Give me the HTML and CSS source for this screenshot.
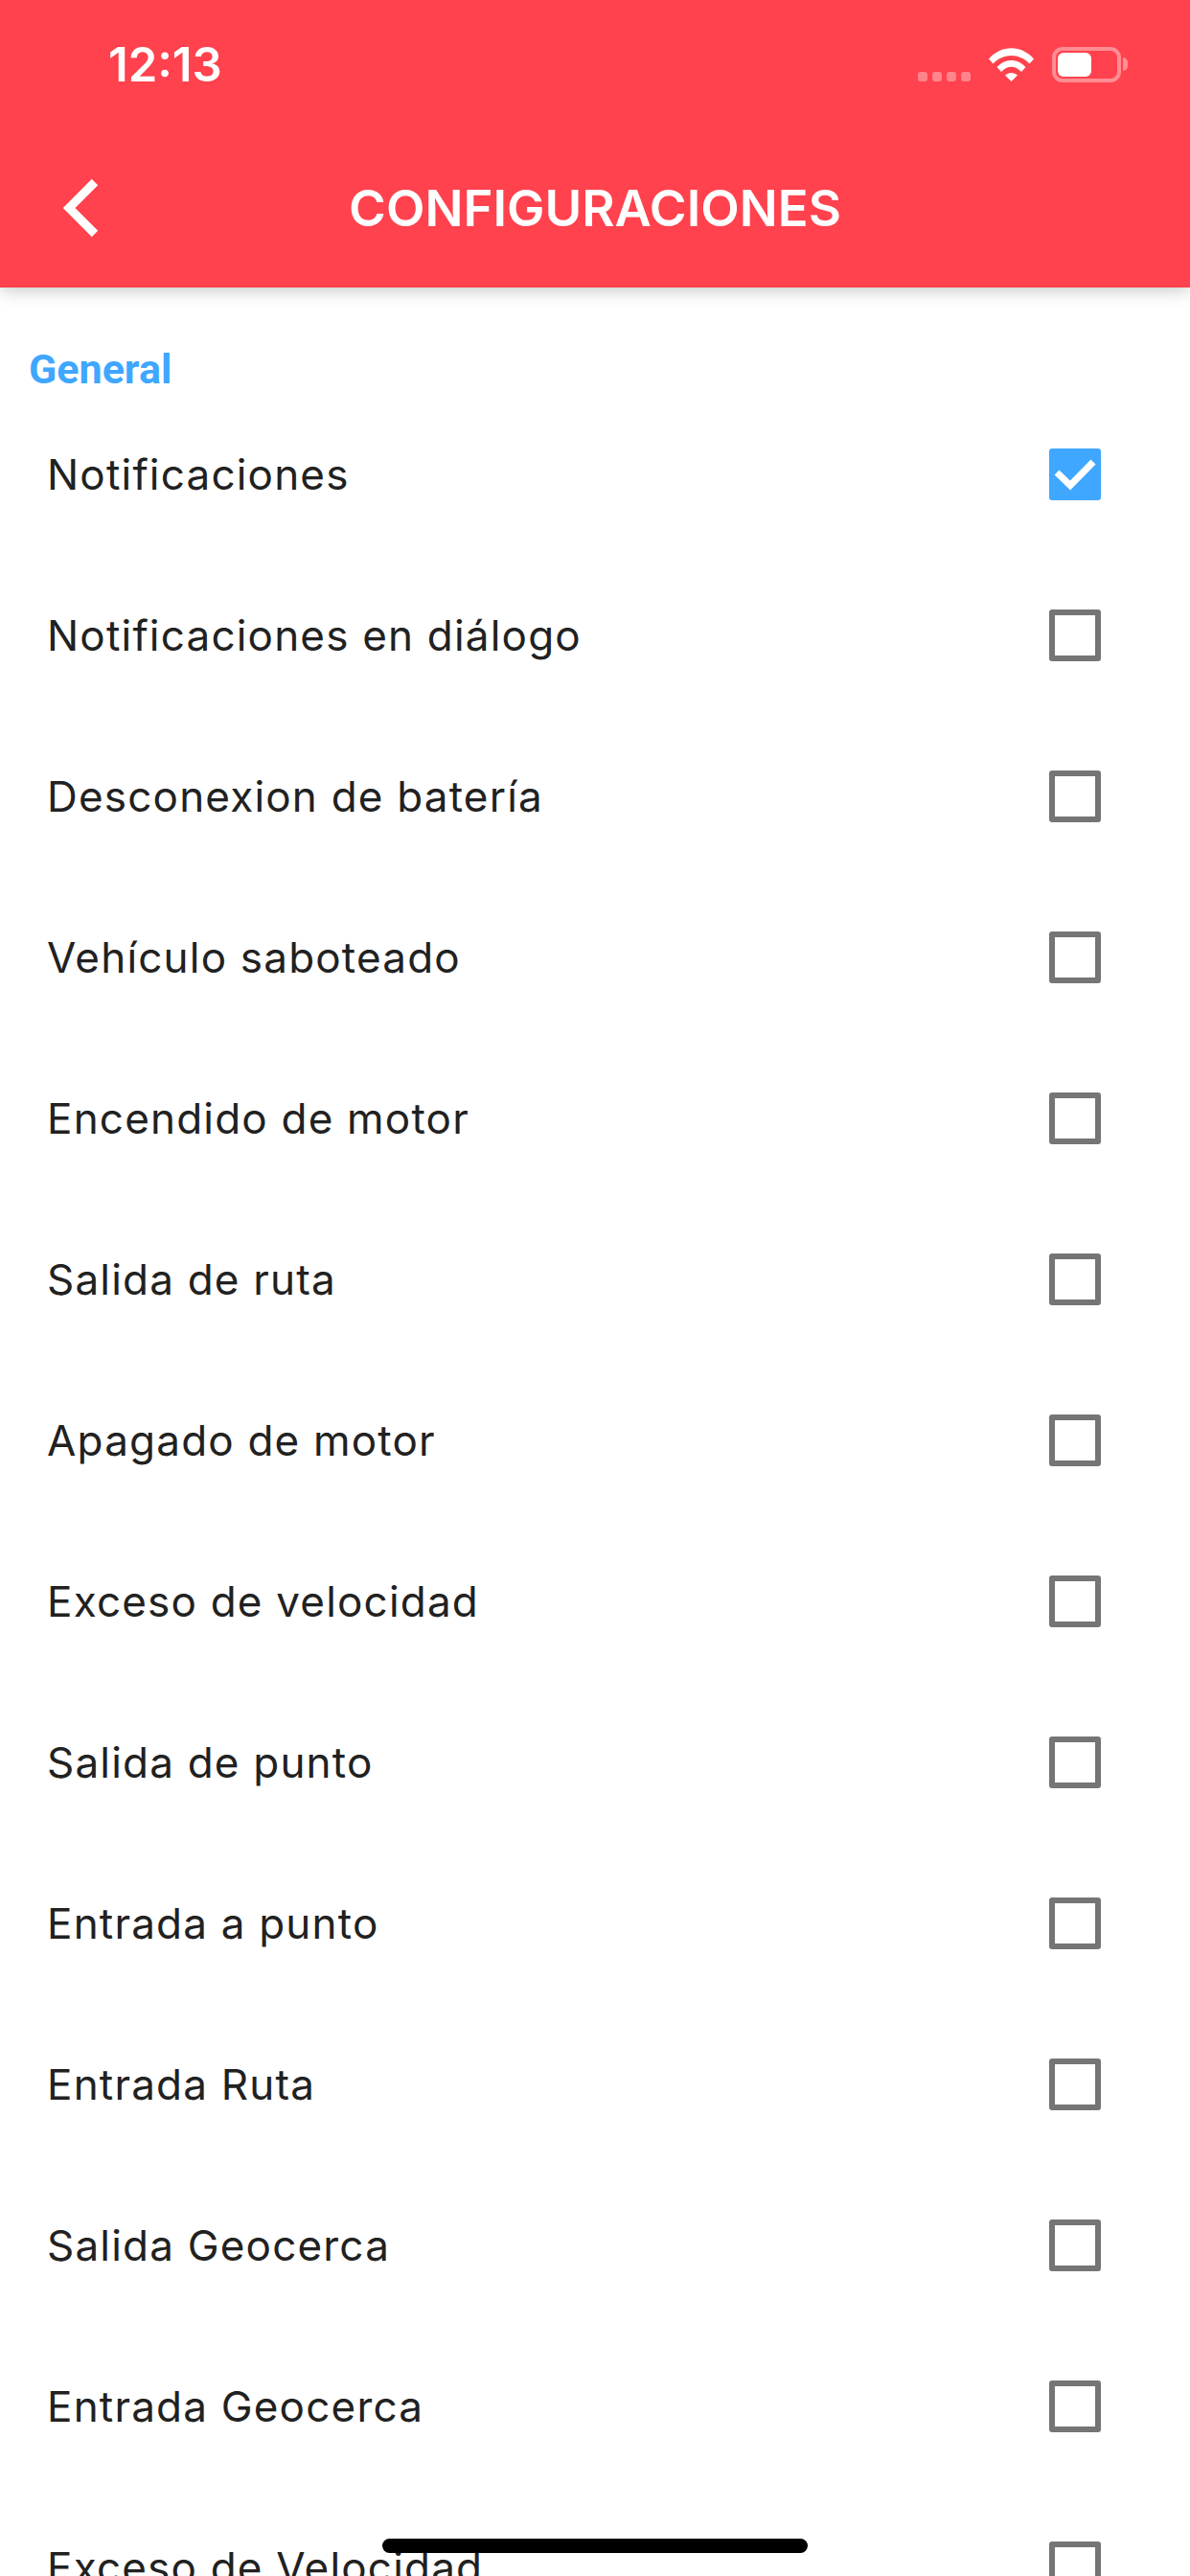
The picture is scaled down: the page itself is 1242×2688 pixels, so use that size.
FILE: index.html
```html
<!DOCTYPE html>
<html lang="es">
<head>
<meta charset="utf-8" />
<title>Configuraciones</title>
<link rel="stylesheet" href="styles.css">
</head>
<body>
<div class="phone">
	<div class="header">
		<div class="status">
			<span class="time">12:13</span>
			<div class="status_icons">
				<div class="signal"><i></i><i></i><i></i><i></i></div>
				<svg class="wifi" width="47" height="36" viewBox="0 0 47 36">
					<path d="M0 12.5 C13 -2.5 34 -2.5 47 12.5 L42.5 17.5 C32 6 15 6 4.5 17.5 Z" fill="#fff"/>
					<path d="M8.5 21 C17 11.5 30 11.5 38.500 21 L34 26 C27.500 19 19.500 19 13 26 Z" fill="#fff"/>
					<path d="M17 29.500 C21 26 26 26 30 29.500 L23.500 36 Z" fill="#fff"/>
				</svg>
				<div class="battery"><div class="battery_fill"></div></div>
				<div class="battery_nub"></div>
			</div>
		</div>
		<div class="toolbar">
			<svg class="back" width="37" height="60" viewBox="0 0 37 60">
				<path d="M33 3 L6 30 L33 57" fill="none" stroke="#fff" stroke-width="9"/>
			</svg>
			<h1>CONFIGURACIONES</h1>
		</div>
	</div>
	<div class="section_title">General</div>
	<ul class="settings">
		<li><span>Notificaciones</span><div class="check on"><svg width="54" height="54" viewBox="0 0 54 54"><path d="M8 25 L22 38.500 L46 14" fill="none" stroke="#fff" stroke-width="7"/></svg></div></li>
		<li><span>Notificaciones en diálogo</span><div class="check"></div></li>
		<li><span>Desconexion de batería</span><div class="check"></div></li>
		<li><span>Vehículo saboteado</span><div class="check"></div></li>
		<li><span>Encendido de motor</span><div class="check"></div></li>
		<li><span>Salida de ruta</span><div class="check"></div></li>
		<li><span>Apagado de motor</span><div class="check"></div></li>
		<li><span>Exceso de velocidad</span><div class="check"></div></li>
		<li><span>Salida de punto</span><div class="check"></div></li>
		<li><span>Entrada a punto</span><div class="check"></div></li>
		<li><span>Entrada Ruta</span><div class="check"></div></li>
		<li><span>Salida Geocerca</span><div class="check"></div></li>
		<li><span>Entrada Geocerca</span><div class="check"></div></li>
		<li><span>Exceso de Velocidad</span><div class="check"></div></li>
	</ul>
	<div class="home_bar"></div>
</div>
</body>
</html>
```

FILE: styles.css
```css
*{ margin:0; padding:0; box-sizing:border-box;}
html,body{ width:1242px; height:2688px; overflow:hidden; background:#fff;}
body{ font-family:Inter,Roboto,"Liberation Sans",sans-serif;}
.phone{ position:relative; width:1242px; height:2688px; overflow:hidden;}

.header{ height:300px; background:#ff424d; box-shadow:0 4px 16px rgba(0,0,0,.2); display:flex; flex-direction:column; position:relative;}
.status{ height:134px; padding:44px 65px 0 113px; display:flex; justify-content:space-between; align-items:flex-start;}
.time{ color:#fff; font-size:49px; font-weight:600; line-height:48px;}
.status_icons{ display:flex; align-items:flex-start; padding-top:5px;}
.signal{ display:flex; gap:5px; margin-top:26px; margin-right:19px;}
.signal i{ display:block; width:10px; height:10px; border-radius:3px; background:rgba(255,255,255,.35);}
.wifi{ display:block; margin-right:19px;}
.battery{ width:72px; height:37px; border:4px solid rgba(255,255,255,.4); border-radius:11px; padding:2px;}
.battery_fill{ width:35px; height:25px; background:#fff; border-radius:6px;}
.battery_nub{ width:5px; height:14px; margin:11px 0 0 2px; background:rgba(255,255,255,.4); border-radius:0 7px 7px 0;}

.toolbar{ flex:1; display:grid; grid-template-columns:1fr auto 1fr; align-items:center;}
.back{ display:block; margin-left:66px;}
.toolbar h1{ color:#fff; font-size:52.7px; font-weight:600; line-height:64px;}

.section_title{ height:111px; padding:61px 0 0 30px; font-family:Roboto,sans-serif; color:#3fa7ff; font-size:43px; font-weight:700; line-height:48px;}

.settings{ list-style:none;}
.settings li{ height:168px; padding:0 93px 0 49px; display:flex; justify-content:space-between; align-items:center; color:#212121; font-size:44px; letter-spacing:1.2px;}
.check{ width:54px; height:54px; border:6px solid #757575; border-radius:3px;}
.check.on{ border:0; background:#3fa7ff;}
.check svg{ display:block;}

.home_bar{ position:absolute; left:399px; top:2649px; width:444px; height:15px; background:#000; border-radius:8px;}
```
